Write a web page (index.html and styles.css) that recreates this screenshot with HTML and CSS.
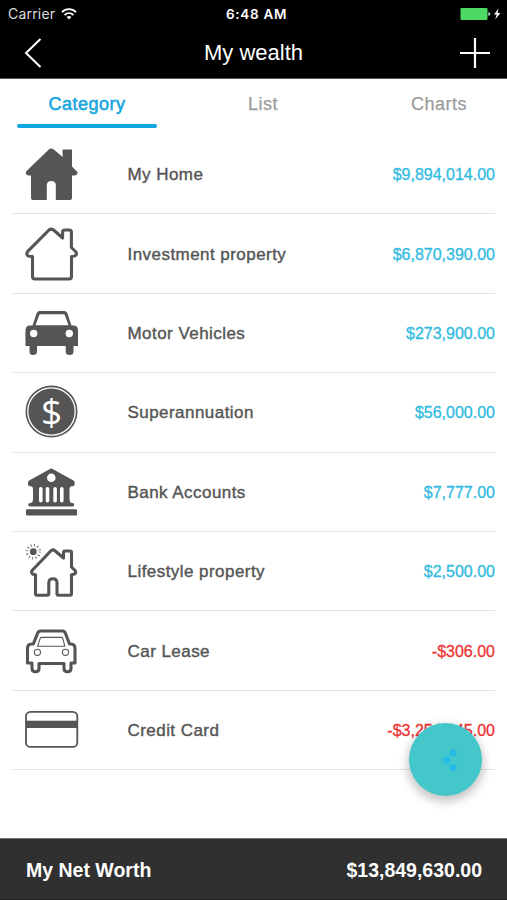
FILE: index.html
```
<!DOCTYPE html>
<html lang="en">
<head>
	<meta charset="utf-8">
	<title>My wealth</title>
	<link rel="stylesheet" href="styles.css">
</head>
<body>
	<div class="statusbar">
		<div class="carrier">
			<span>Carrier</span>
			<svg width="16" height="12" viewBox="0 0 16 12" fill="none" stroke="#fff" stroke-width="1.8">
				<path d="M1 4.2C5 .2 11 .2 15 4.2" />
				<path d="M3.6 7C6.2 4.5 9.8 4.5 12.4 7" />
				<path d="M5.6 9Q8 7 10.4 9L8 11.6z" fill="#fff" stroke="none" />
			</svg>
		</div>
		<div class="time">6:48 AM</div>
		<div class="battery">
			<svg width="41" height="14" viewBox="0 0 41 14">
				<rect x="0.5" y="1" width="27" height="12" rx="1.2" fill="#4cd964" />
				<path d="M28.3 5.3q2 0 2 1.7t-2 1.7z" fill="#b5ecc0" />
				<path d="M38.6 1.500L34 7.600h2.700L35.200 12.500l5.200-6.600h-2.900z" fill="#fff" />
			</svg>
		</div>
	</div>

	<div class="navbar">
		<svg width="32" height="32" viewBox="0 0 32 32" fill="none" stroke="#fff" stroke-width="2">
			<path d="M24.5 2L10 16L24.5 30" />
		</svg>
		<h1>My wealth</h1>
		<svg width="32" height="32" viewBox="0 0 32 32" fill="none" stroke="#fff" stroke-width="2.2">
			<path d="M16 1V31M1 16H31" />
		</svg>
	</div>

	<div class="tabs">
		<div class="tab active">Category</div>
		<div class="tab">List</div>
		<div class="tab">Charts</div>
	</div>

	<div class="list">
		<div class="row">
			<svg class="icon" viewBox="0 0 56 60">
				<path class="solid" d="M25.8 5.4Q28.3 3.4 30.8 5.4L39.6 13V5.5H49V22.5L54 27.4Q56.4 31.6 49 31.6V54q0 2-2 2H32.8V41.5q0-4.5-4.5-4.5t-4.5 4.5V56H10q-2 0-2-2V31.6Q.6 31.6 3.6 27z" />
			</svg>
			<div class="name">My Home</div>
			<div class="amount">$9,894,014.00</div>
		</div>
		<div class="row">
			<svg class="icon" viewBox="0 0 56 60">
				<path class="outline" d="M26 6Q28.3 4.2 30.6 6L39.6 14V8q0-2 2-2H46.4q2 0 2 2V23.5L53 28Q54.6 31.5 50.5 32.3L48.500 32.5V52.5q0 2.500-2.500 2.500H12q-2.500 0-2.500-2.500V32.5L6 32.2Q2.500 31 4.500 27.700z" />
			</svg>
			<div class="name">Investment property</div>
			<div class="amount">$6,870,390.00</div>
		</div>
		<div class="row">
			<svg class="icon" viewBox="0 0 56 60">
				<path class="solid" fill-rule="evenodd" d="M16.5 8H41.5q2.200 0 3 2.500L48.500 22.500H50.500q4.500 0 4.500 5V43H50.500V48.500q0 3.500-3.900 3.500t-3.900-3.500V43H14V48.500q0 3.500-3.800 3.500T6.500 48.500V43H2.500V27.500q0-5 4.500-5H9.500L13.500 10.500q.8-2.500 3-2.500zM17.500 11.200q-1 0-1.400 1.200L12.500 22.200H45.500L42 12.400q-.4-1.200-1.400-1.200z" />
				<circle cx="10.7" cy="30.5" r="3.7" fill="#fff" />
				<circle cx="46.3" cy="30.5" r="3.7" fill="#fff" />
			</svg>
			<div class="name">Motor Vehicles</div>
			<div class="amount">$273,900.00</div>
		</div>
		<div class="row">
			<svg class="icon" viewBox="0 0 56 60">
				<circle class="solid" cx="28.5" cy="29.5" r="26" />
				<circle cx="28.5" cy="29.5" r="23.7" fill="none" stroke="#fff" stroke-width="1.3" />
				<text class="dollar" x="28.6" y="43">$</text>
			</svg>
			<div class="name">Superannuation</div>
			<div class="amount">$56,000.00</div>
		</div>
		<div class="row">
			<svg class="icon" viewBox="0 0 56 60">
				<path class="solid" d="M26.500 7.200Q28.300 5.800 30.100 7.200L50.500 18.500Q51.700 19.300 51.700 20.500V22q0 2.200-2 2.200H48.500Q46.500 24.500 46.500 27V37.500q0 2.500 2 3.500h1q1.800 0 1.800 1.800T49.500 44.600H7q-1.800 0-1.800-1.800T7 41H8q2-1 2-3.500V27q0-2.500-2-2.800H7Q5 24.200 5 22V20.500Q5 19.300 6.200 18.500z" />
				<circle cx="28.3" cy="15.8" r="4.3" fill="#fff" />
				<rect x="16" y="25" width="3.6" height="15.5" rx="1.8" fill="#fff" />
				<rect x="22.7" y="25" width="3.6" height="15.5" rx="1.8" fill="#fff" />
				<rect x="30.3" y="25" width="3.6" height="15.5" rx="1.8" fill="#fff" />
				<rect x="37" y="25" width="3.6" height="15.5" rx="1.8" fill="#fff" />
				<rect class="solid" x="3" y="47.3" width="51" height="6.3" rx="1" />
			</svg>
			<div class="name">Bank Accounts</div>
			<div class="amount">$7,777.00</div>
		</div>
		<div class="row">
			<svg class="icon" viewBox="0 0 56 60">
				<circle class="solid" cx="10.3" cy="10.7" r="3.4" />
				<circle cx="10.3" cy="10.7" r="6.5" fill="none" stroke="#555" stroke-width="2.6" stroke-dasharray=".8 2.603" />
				<path class="outline" d="M28 9.700Q30 8.100 32 9.700L40.500 17V11.500q0-1.500 1.500-1.500H47q1.500 0 1.500 1.500V26L52.500 30Q53.500 32.700 50.500 33.300L48.500 33.700V52.700q0 1.500-1.500 1.500H35.500q-1.500 0-1.500-1.500V42q0-4.300-4.100-4.300T25.800 42V52.700q0 1.500-1.500 1.500H14q-1.500 0-1.500-1.500V33.700L10 33.300Q7.600 31.800 9.300 29.200z" />
			</svg>
			<div class="name">Lifestyle property</div>
			<div class="amount">$2,500.00</div>
		</div>
		<div class="row">
			<svg class="icon" viewBox="0 0 56 60">
				<path class="outline" d="M17.500 10H39.500q2 0 2.800 2L46.500 23H48q4 0 4 4.500V42H48V47.500q0 3.200-3.500 3.200T41 47.500V42.500H16V47.500q0 3.200-3.500 3.200T9 47.500V42H4.500V27.500Q4.500 23 8.500 23H10.300L14.700 12q.8-2 2.800-2z" />
				<path class="thin" d="M18.500 16.400H38.500q1 0 1.300 1L41.800 25.200H14.700L17.200 17.400q.3-1 1.300-1z" />
				<circle class="thin" cx="14.4" cy="31.3" r="3.1" />
				<circle class="thin" cx="42.5" cy="31.3" r="3.1" />
			</svg>
			<div class="name">Car Lease</div>
			<div class="amount negative">-$306.00</div>
		</div>
		<div class="row">
			<svg class="icon" viewBox="0 0 56 60">
				<rect x="3" y="11.9" width="51.3" height="35" rx="4.5" fill="none" stroke="#555" stroke-width="1.8" />
				<rect class="solid" x="3" y="20.7" width="51.3" height="7.3" />
			</svg>
			<div class="name">Credit Card</div>
			<div class="amount negative">-$3,254,645.00</div>
		</div>
	</div>

	<div class="fab">
		<svg width="16" height="24" viewBox="0 0 16 24" fill="#25bbe6">
			<circle cx="11" cy="5" r="3.5" />
			<circle cx="4.5" cy="12" r="3.5" />
			<circle cx="11" cy="19.5" r="3.5" />
		</svg>
	</div>

	<div class="footer">
		<span>My Net Worth</span>
		<span>$13,849,630.00</span>
	</div>
</body>
</html>
```
FILE: styles.css
```
* {
	box-sizing: border-box;
}

body {
	margin: 0;
	height: 900px;
	display: flex;
	flex-direction: column;
	overflow: hidden;
	background: #fff;
	font-family: "Liberation Sans", Arial, sans-serif;
	color: #555;
}

.statusbar {
	display: flex;
	align-items: center;
	height: 27px;
	padding: 0 6px 0 8px;
	background: #000;
	color: #fff;
	font-family: Inter, sans-serif;
	font-size: 14px;
}

.carrier, .battery {
	flex: 1;
	display: flex;
	align-items: center;
}

.carrier {
	gap: 6px;
	color: #ddd;
	letter-spacing: .2px;
}

.battery {
	justify-content: flex-end;
}

.time {
	padding-left: 4px;
	font-weight: 600;
	font-size: 13.5px;
	letter-spacing: .7px;
}

.navbar {
	display: flex;
	align-items: center;
	justify-content: space-between;
	height: 52px;
	padding: 0 16px;
	background: #000;
	border-bottom: 1px solid #555;
	color: #fff;
}

.navbar h1 {
	margin: 0;
	font-size: 22px;
	font-weight: normal;
}

.tabs {
	display: flex;
	gap: 36px;
	height: 56px;
	padding: 0 0 7px 17px;
}

.tab {
	flex: 0 0 140px;
	padding-top: 15px;
	text-align: center;
	font-size: 18px;
	line-height: 21px;
	letter-spacing: .5px;
	color: #9b9b9b;
	-webkit-text-stroke: .25px;
}

.tab.active {
	position: relative;
	color: #1aa7e0;
	-webkit-text-stroke: .6px;
}

.tab.active::after {
	content: "";
	position: absolute;
	left: 0;
	right: 0;
	bottom: 0;
	height: 4px;
	border-radius: 2px;
	background: #11a5e2;
}

.list {
	flex: 1;
	padding: 0 12px 0 13px;
}

.row {
	display: flex;
	align-items: center;
	height: 79.4px;
	padding-left: 10px;
	border-bottom: 1px solid #e2e2e2;
}

.icon {
	width: 56px;
	height: 60px;
}

.solid {
	fill: #555;
}

.outline {
	fill: none;
	stroke: #555;
	stroke-width: 3.1;
	stroke-linejoin: round;
}

.thin {
	fill: none;
	stroke: #555;
	stroke-width: 1.1;
}

.dollar {
	fill: #fff;
	font-family: "Open Sans", sans-serif;
	font-size: 37px;
	text-anchor: middle;
}

.name {
	flex: 1;
	margin-left: 48.5px;
	padding-top: 2px;
	font-size: 17px;
	letter-spacing: .45px;
	-webkit-text-stroke: .4px;
}

.amount {
	padding-top: 2px;
	font-size: 16px;
	color: #2fbbdf;
	-webkit-text-stroke: .3px;
}

.negative {
	color: #e33;
}

.fab {
	position: absolute;
	left: 409px;
	top: 723px;
	display: flex;
	align-items: center;
	justify-content: center;
	width: 73px;
	height: 73px;
	padding-left: 8px;
	border-radius: 50%;
	background: #43c7cb;
	box-shadow: 0 4px 10px 2px rgba(0, 0, 0, .22);
}

.footer {
	display: flex;
	align-items: center;
	justify-content: space-between;
	height: 62px;
	padding: 2px 25px 0 26px;
	background: #303030;
	border-top: 1px solid #777;
	border-bottom: 1px solid #222;
	color: #fff;
	font-size: 19.5px;
	font-weight: bold;
}
```
